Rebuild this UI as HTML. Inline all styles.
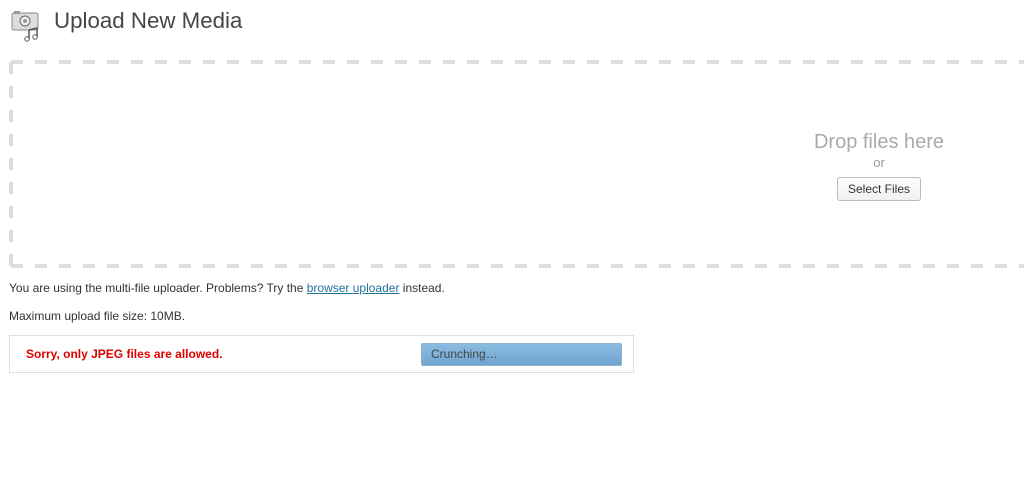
<!DOCTYPE html>
<html><head><style>
body{margin:0;background:#fff;font-family:"Liberation Sans",Arial,sans-serif;color:#333;width:1024px;height:500px;overflow:hidden;position:relative}
h2{position:absolute;left:54px;top:8px;margin:0;font-weight:normal;font-size:22.3px;color:#464646}
.dt{position:absolute;left:779px;top:131px;width:200px;text-align:center;white-space:nowrap}
.dt1{font-size:20px;color:#aaa;line-height:22px}
.dt2{font-size:13px;color:#999;line-height:16px;margin-top:2px}
.btn{display:inline-block;margin-top:6px;border:1px solid #bbb;border-radius:3px;background:linear-gradient(#fefefe,#f0f0f0);font-size:12px;padding:4px 10px;color:#333}
p{position:absolute;left:9px;margin:0;font-size:12px;color:#333;white-space:nowrap}
a{color:#21759b}
.err{position:absolute;left:9px;top:335px;width:623px;height:36px;border:1px solid #dfdfdf}
.et{position:absolute;left:16px;top:11px;font-size:12px;font-weight:bold;color:#d00}
.bar{position:absolute;left:411px;top:7px;border:1px solid #8fb2cf;border-radius:2px;background:linear-gradient(#8cbde3,#6fa3cf);font-size:12px;color:#444;line-height:21px;padding-left:9px;box-sizing:border-box;width:201px;height:23px}
</style></head><body>
<svg style="position:absolute;left:11px;top:10px" width="32" height="32" viewBox="0 0 32 32">
<rect x="1" y="3" width="26" height="17" rx="2" fill="#ddd" stroke="#888"/>
<rect x="3" y="1" width="6" height="3" fill="#999"/>
<circle cx="14" cy="11" r="5" fill="#eee" stroke="#666"/>
<circle cx="14" cy="11" r="2" fill="#999"/>
<path d="M18 20v9M26 18v9M18 20l8-2" stroke="#555" stroke-width="1.5" fill="none"/>
<circle cx="16" cy="29" r="2.2" fill="#fff" stroke="#555"/>
<circle cx="24" cy="27" r="2.2" fill="#fff" stroke="#555"/>
</svg>
<h2>Upload New Media</h2>
<svg style="position:absolute;left:0;top:0" width="1024" height="280">
<g stroke="#dddddd" stroke-width="4" fill="none" stroke-dasharray="12 12">
<path d="M11 62H1100"/>
<path d="M11 266H1100"/>
<path d="M11 62V266"/>
</g>
</svg>
<div class="dt"><div class="dt1">Drop files here</div><div class="dt2">or</div><span class="btn">Select Files</span></div>
<p style="top:281px">You are using the multi-file uploader. Problems? Try the <a href="#">browser uploader</a> instead.</p>
<p style="top:309px">Maximum upload file size: 10MB.</p>
<div class="err"><div class="et">Sorry, only JPEG files are allowed.</div><div class="bar">Crunching…</div></div>
</body></html>
